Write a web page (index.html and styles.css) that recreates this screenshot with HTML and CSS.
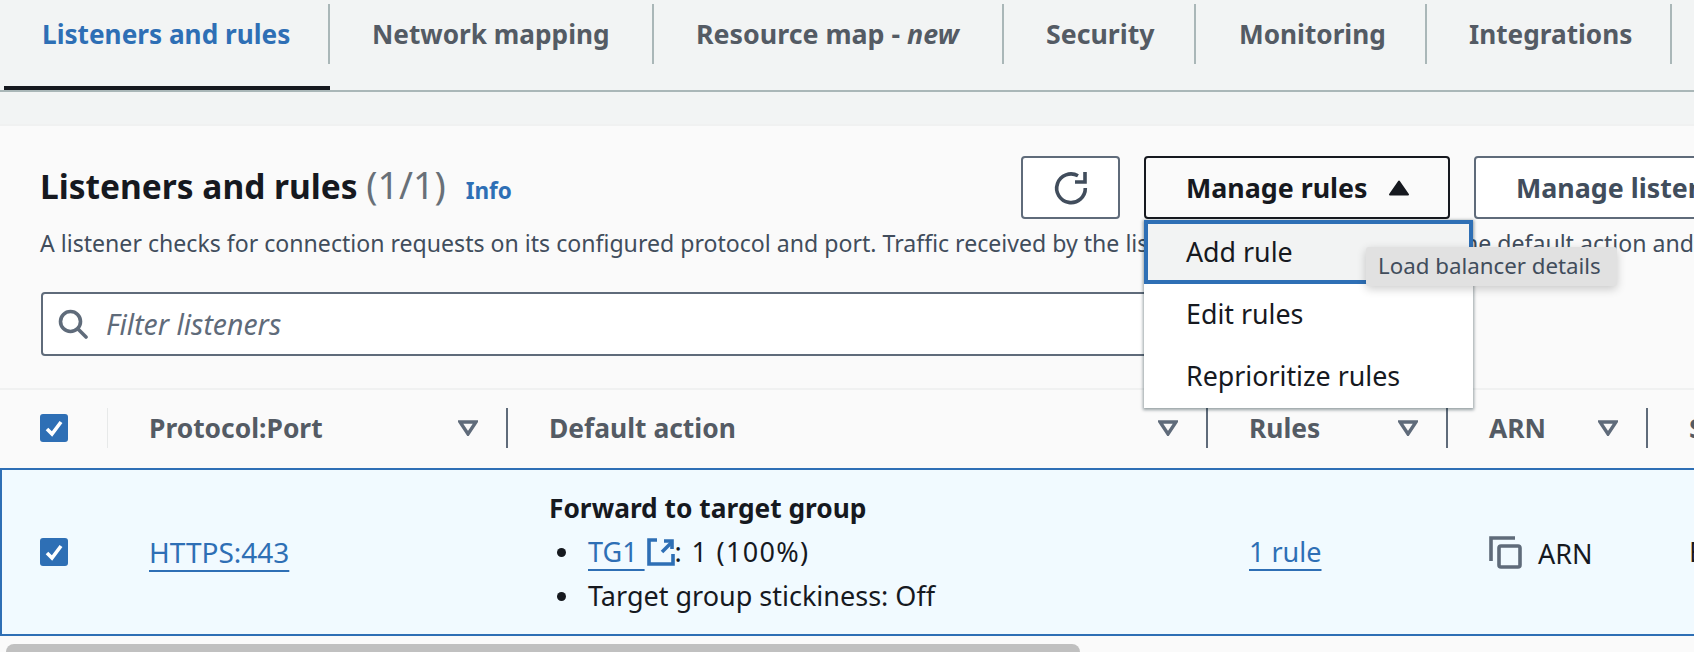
FILE: index.html
```html
<!DOCTYPE html>
<html lang="en">
<head>
<meta charset="utf-8">
<title>Listeners and rules</title>
<link rel="stylesheet" href="styles.css">
</head>
<body>
<nav class="tabs">
  <a class="tab tab-active">Listeners and rules</a>
  <a class="tab tab-network">Network mapping</a>
  <a class="tab tab-resource">Resource map - <em>new</em></a>
  <a class="tab tab-security">Security</a>
  <a class="tab tab-monitoring">Monitoring</a>
  <a class="tab tab-integrations">Integrations</a>
</nav>
<main class="panel">
  <header class="panel-head">
    <div class="title-row">
      <h2 class="title">Listeners and rules <span class="count">(1/1)</span></h2>
      <a class="info">Info</a>
      <div class="actions">
        <button class="btn btn-icon" aria-label="Refresh">
          <svg width="36" height="36" viewBox="0 0 36 36" fill="none" stroke="#414d5c" stroke-width="3.600"><path d="M25 5.800A14.300 14.300 0 1 0 32.300 18"/><path d="M32 2V12H22"/></svg>
        </button>
        <div class="menu-wrap">
          <button class="btn btn-open">Manage rules
            <svg class="caret-up" width="22" height="16" viewBox="0 0 22 16"><path d="M11 1.500 20 14.500H2Z" fill="#16191f" stroke="#16191f" stroke-width="2" stroke-linejoin="round"/></svg>
          </button>
          <ul class="menu">
            <li class="menu-item menu-item-focus">Add rule</li>
            <li class="menu-item">Edit rules</li>
            <li class="menu-item">Reprioritize rules</li>
          </ul>
          <div class="tooltip">Load balancer details</div>
        </div>
        <button class="btn btn-listener">Manage listener</button>
      </div>
    </div>
    <p class="desc">A listener checks for connection requests on its configured protocol and port. Traffic received by the listener is routed according to the default action and any additional rules.</p>
    <div class="filter">
      <svg width="30" height="30" viewBox="0 0 30 30" fill="none" stroke="#5f6b7a" stroke-width="3.600"><circle cx="12.500" cy="12.500" r="10"/><path d="m20 20 8 8" stroke-linecap="round"/></svg>
      <span class="filter-text">Filter listeners</span>
    </div>
  </header>
  <section class="table">
    <div class="row-head">
      <div class="cell-check"><span class="check"><svg width="28" height="28" viewBox="0 0 28 28" fill="none" stroke="#fff" stroke-width="3.600"><path d="m7 15 5 5 9-12"/></svg></span></div>
      <div class="th">Protocol:Port <svg class="sort" width="20" height="16" viewBox="0 0 20 16" fill="none" stroke="#5f6b7a" stroke-width="3.400"><path d="M2 2h16l-8 12Z"/></svg></div>
      <div class="th">Default action <svg class="sort" width="20" height="16" viewBox="0 0 20 16" fill="none" stroke="#5f6b7a" stroke-width="3.400"><path d="M2 2h16l-8 12Z"/></svg></div>
      <div class="th">Rules <svg class="sort" width="20" height="16" viewBox="0 0 20 16" fill="none" stroke="#5f6b7a" stroke-width="3.400"><path d="M2 2h16l-8 12Z"/></svg></div>
      <div class="th">ARN <svg class="sort" width="20" height="16" viewBox="0 0 20 16" fill="none" stroke="#5f6b7a" stroke-width="3.400"><path d="M2 2h16l-8 12Z"/></svg></div>
      <div class="th th-last">Security</div>
    </div>
    <div class="row">
      <div class="cell-check"><span class="check"><svg width="28" height="28" viewBox="0 0 28 28" fill="none" stroke="#fff" stroke-width="3.600"><path d="m7 15 5 5 9-12"/></svg></span></div>
      <div class="td"><a class="link link-port">HTTPS:443</a></div>
      <div class="td td-action">
        <strong class="action-title">Forward to target group</strong>
        <ul class="action-list">
          <li><a class="link">TG1&nbsp;</a><svg class="ext" width="28" height="28" viewBox="0 0 28 28" fill="none" stroke="#2e6fb5" stroke-width="3.600"><path d="M10 2H2v24h24V16"/><path d="M15 14 25 4"/><path d="M17 3h8v8"/></svg><span class="weight">: 1 (100%)</span></li>
          <li>Target group stickiness: Off</li>
        </ul>
      </div>
      <div class="td"><a class="link">1 rule</a></div>
      <div class="td td-arn"><svg width="33" height="33" viewBox="0 0 33 33" fill="none" stroke="#5f6b7a" stroke-width="3.600"><path d="M2 25V2h24"/><rect x="10" y="10" width="21" height="21" rx="2"/></svg><span class="arn-text">ARN</span></div>
      <div class="td td-last">Enabled</div>
    </div>
    <div class="scrollbar"></div>
  </section>
</main>
</body>
</html>
```
FILE: styles.css
```css
* { box-sizing: border-box; }
html, body { margin: 0; padding: 0; height: 652px; overflow: hidden; }
body {
  width: 1694px;
  background: #f2f4f4;
  font-family: "Noto Sans", "Liberation Sans", sans-serif;
  color: #16191f;
}
a { cursor: pointer; }
em { font-style: italic; }

.tabs {
  display: flex;
  height: 92px;
  padding-left: 4px;
  border-bottom: 2px solid #aab7b8;
  overflow: hidden;
}
.tab {
  position: relative;
  height: 90px;
  padding: 16px 0 0 38px;
  font-size: 26.200px;
  line-height: 36px;
  font-weight: 700;
  color: #545b64;
  white-space: nowrap;
}
.tab::after {
  content: "";
  position: absolute;
  right: 0;
  top: 4px;
  height: 60px;
  width: 2px;
  background: #aab7b8;
}
.tab-active { width: 326px; color: #2e6fb5; border-bottom: 4px solid #16191f; }
.tab-network { width: 324px; padding-left: 42px; }
.tab-resource { width: 350px; padding-left: 42px; font-size: 26.800px; }
.tab-security { width: 192px; padding-left: 42px; font-size: 26.700px; }
.tab-monitoring { width: 231px; padding-left: 43px; }
.tab-integrations { width: 245px; padding-left: 42px; }

.panel {
  margin-top: 32px;
  height: 528px;
  background: #fafafa;
  border-top: 2px solid #f0f1f1;
}
.panel-head { padding: 30px 0 0 41px; height: 262px; }
.title-row { display: flex; align-items: flex-start; height: 63px; }
.title {
  margin: 6px 0 0 -1px;
  font-size: 33.500px;
  line-height: 46px;
  font-weight: 700;
  white-space: nowrap;
}
.count { font-size: 37.500px; font-weight: 400; color: #687078; }
.info {
  margin: 18px 0 0 20px;
  font-size: 22.500px;
  line-height: 34px;
  font-weight: 700;
  color: #2e6fb5;
}
.actions { position: absolute; left: 1021px; top: 156px; display: flex; }
.btn {
  height: 63px;
  border: 2px solid #5f6b7a;
  border-radius: 4px;
  background: #fff;
  font: 700 26.800px/34px "Noto Sans", sans-serif;
  color: #414d5c;
  white-space: nowrap;
  display: flex;
  align-items: center;
}
.btn-icon { width: 99px; justify-content: center; margin-right: 24px; padding: 0; }
.menu-wrap { position: relative; width: 306px; margin-right: 24px; }
.btn-open {
  width: 306px;
  padding: 0 0 0 40px;
  background: #fafafa;
  border-color: #16191f;
  color: #16191f;
}
.caret-up { margin-left: 20px; }
.btn-listener { width: 300px; padding: 0 0 0 40px; }

.menu {
  position: absolute;
  z-index: 2;
  left: 0;
  top: 64px;
  width: 329px;
  height: 188px;
  margin: 0;
  padding: 0;
  list-style: none;
  background: #fff;
  box-shadow: 0 1px 3px 1px rgba(0, 28, 36, .4);
}
.menu-item {
  height: 62px;
  padding-left: 42px;
  font-size: 26.800px;
  line-height: 60px;
  color: #16191f;
}
.menu-item-focus {
  height: 64px;
  padding-left: 38px;
  background: #f2f3f3;
  border: 4px solid #2e6fb5;
  line-height: 56px;
}
.tooltip {
  position: absolute;
  z-index: 3;
  left: 222px;
  top: 91px;
  width: 251px;
  height: 39px;
  padding-left: 12px;
  background: #e1e1e1;
  border-radius: 3px;
  font-size: 22.300px;
  line-height: 37px;
  color: #414d5c;
  box-shadow: 0 3px 10px rgba(0, 0, 0, .2);
  white-space: nowrap;
}

.desc {
  margin: 8px 0 0 -1px;
  font-size: 23.100px;
  line-height: 32px;
  color: #414d5c;
  white-space: nowrap;
}
.filter {
  display: flex;
  align-items: center;
  gap: 18px;
  width: 1110px;
  height: 64px;
  margin-top: 33px;
  padding-left: 15px;
  background: #fff;
  border: 2px solid #5f6b7a;
  border-radius: 4px;
}
.filter-text { font-size: 28.400px; font-style: italic; color: #5f6b7a; }

.table { border-top: 2px solid #f0f1f1; }
.row-head, .row {
  display: grid;
  grid-template-columns: 108px 400px 700px 240px 200px 1fr;
}
.row-head { height: 78px; padding-bottom: 2px; align-items: center; }
.cell-check { display: flex; align-items: center; padding-left: 40px; }
.check {
  width: 28px;
  height: 28px;
  border-radius: 3px;
  background: #2e6fb5;
}
.check svg { display: block; }
.row-head > .cell-check { position: relative; height: 40px; }
.row-head > .cell-check::after {
  content: "";
  position: absolute;
  right: 0;
  top: 0;
  height: 40px;
  width: 1px;
  background: #e7e9e9;
}
.th {
  display: flex;
  align-items: center;
  justify-content: space-between;
  height: 40px;
  padding: 0 28px 0 41px;
  border-right: 2px solid #5f6b7a;
  font-size: 26.400px;
  font-weight: 700;
  color: #545b64;
  white-space: nowrap;
}
.th-last { border-right: 0; padding-right: 0; justify-content: flex-start; }
.sort { flex: none; }

.row {
  height: 168px;
  align-items: center;
  background: #f1faff;
  border-top: 2px solid #2e6fb5;
  border-bottom: 2px solid #2e6fb5;
  box-shadow: inset 2px 0 0 #2e6fb5;
  font-size: 27px;
  line-height: 44px;
}
.td { padding-left: 41px; white-space: nowrap; }
.td-arn { display: flex; align-items: center; gap: 16px; }
.arn-text { position: relative; top: 2px; }
.link {
  color: #2e6fb5;
  text-decoration: underline 2px #2e6fb5;
  text-decoration-skip-ink: none;
  text-underline-offset: 7px;
}
.link-port { font-size: 28px; }
.weight { letter-spacing: 1.300px; }
.action-title { display: block; font-size: 26.300px; font-weight: 700; }
.action-list { margin: 0; padding: 0 0 0 39px; list-style: none; }
.action-list li { position: relative; }
.action-list li::before {
  content: "";
  position: absolute;
  left: -31px;
  top: 18px;
  width: 9px;
  height: 9px;
  border-radius: 50%;
  background: #16191f;
}
.ext { vertical-align: -4px; margin-left: 2px; }
.scrollbar {
  width: 1074px;
  height: 20px;
  margin: 8px 0 0 6px;
  border-radius: 8px 8px 0 0;
  background: #c0c0c0;
}
```
